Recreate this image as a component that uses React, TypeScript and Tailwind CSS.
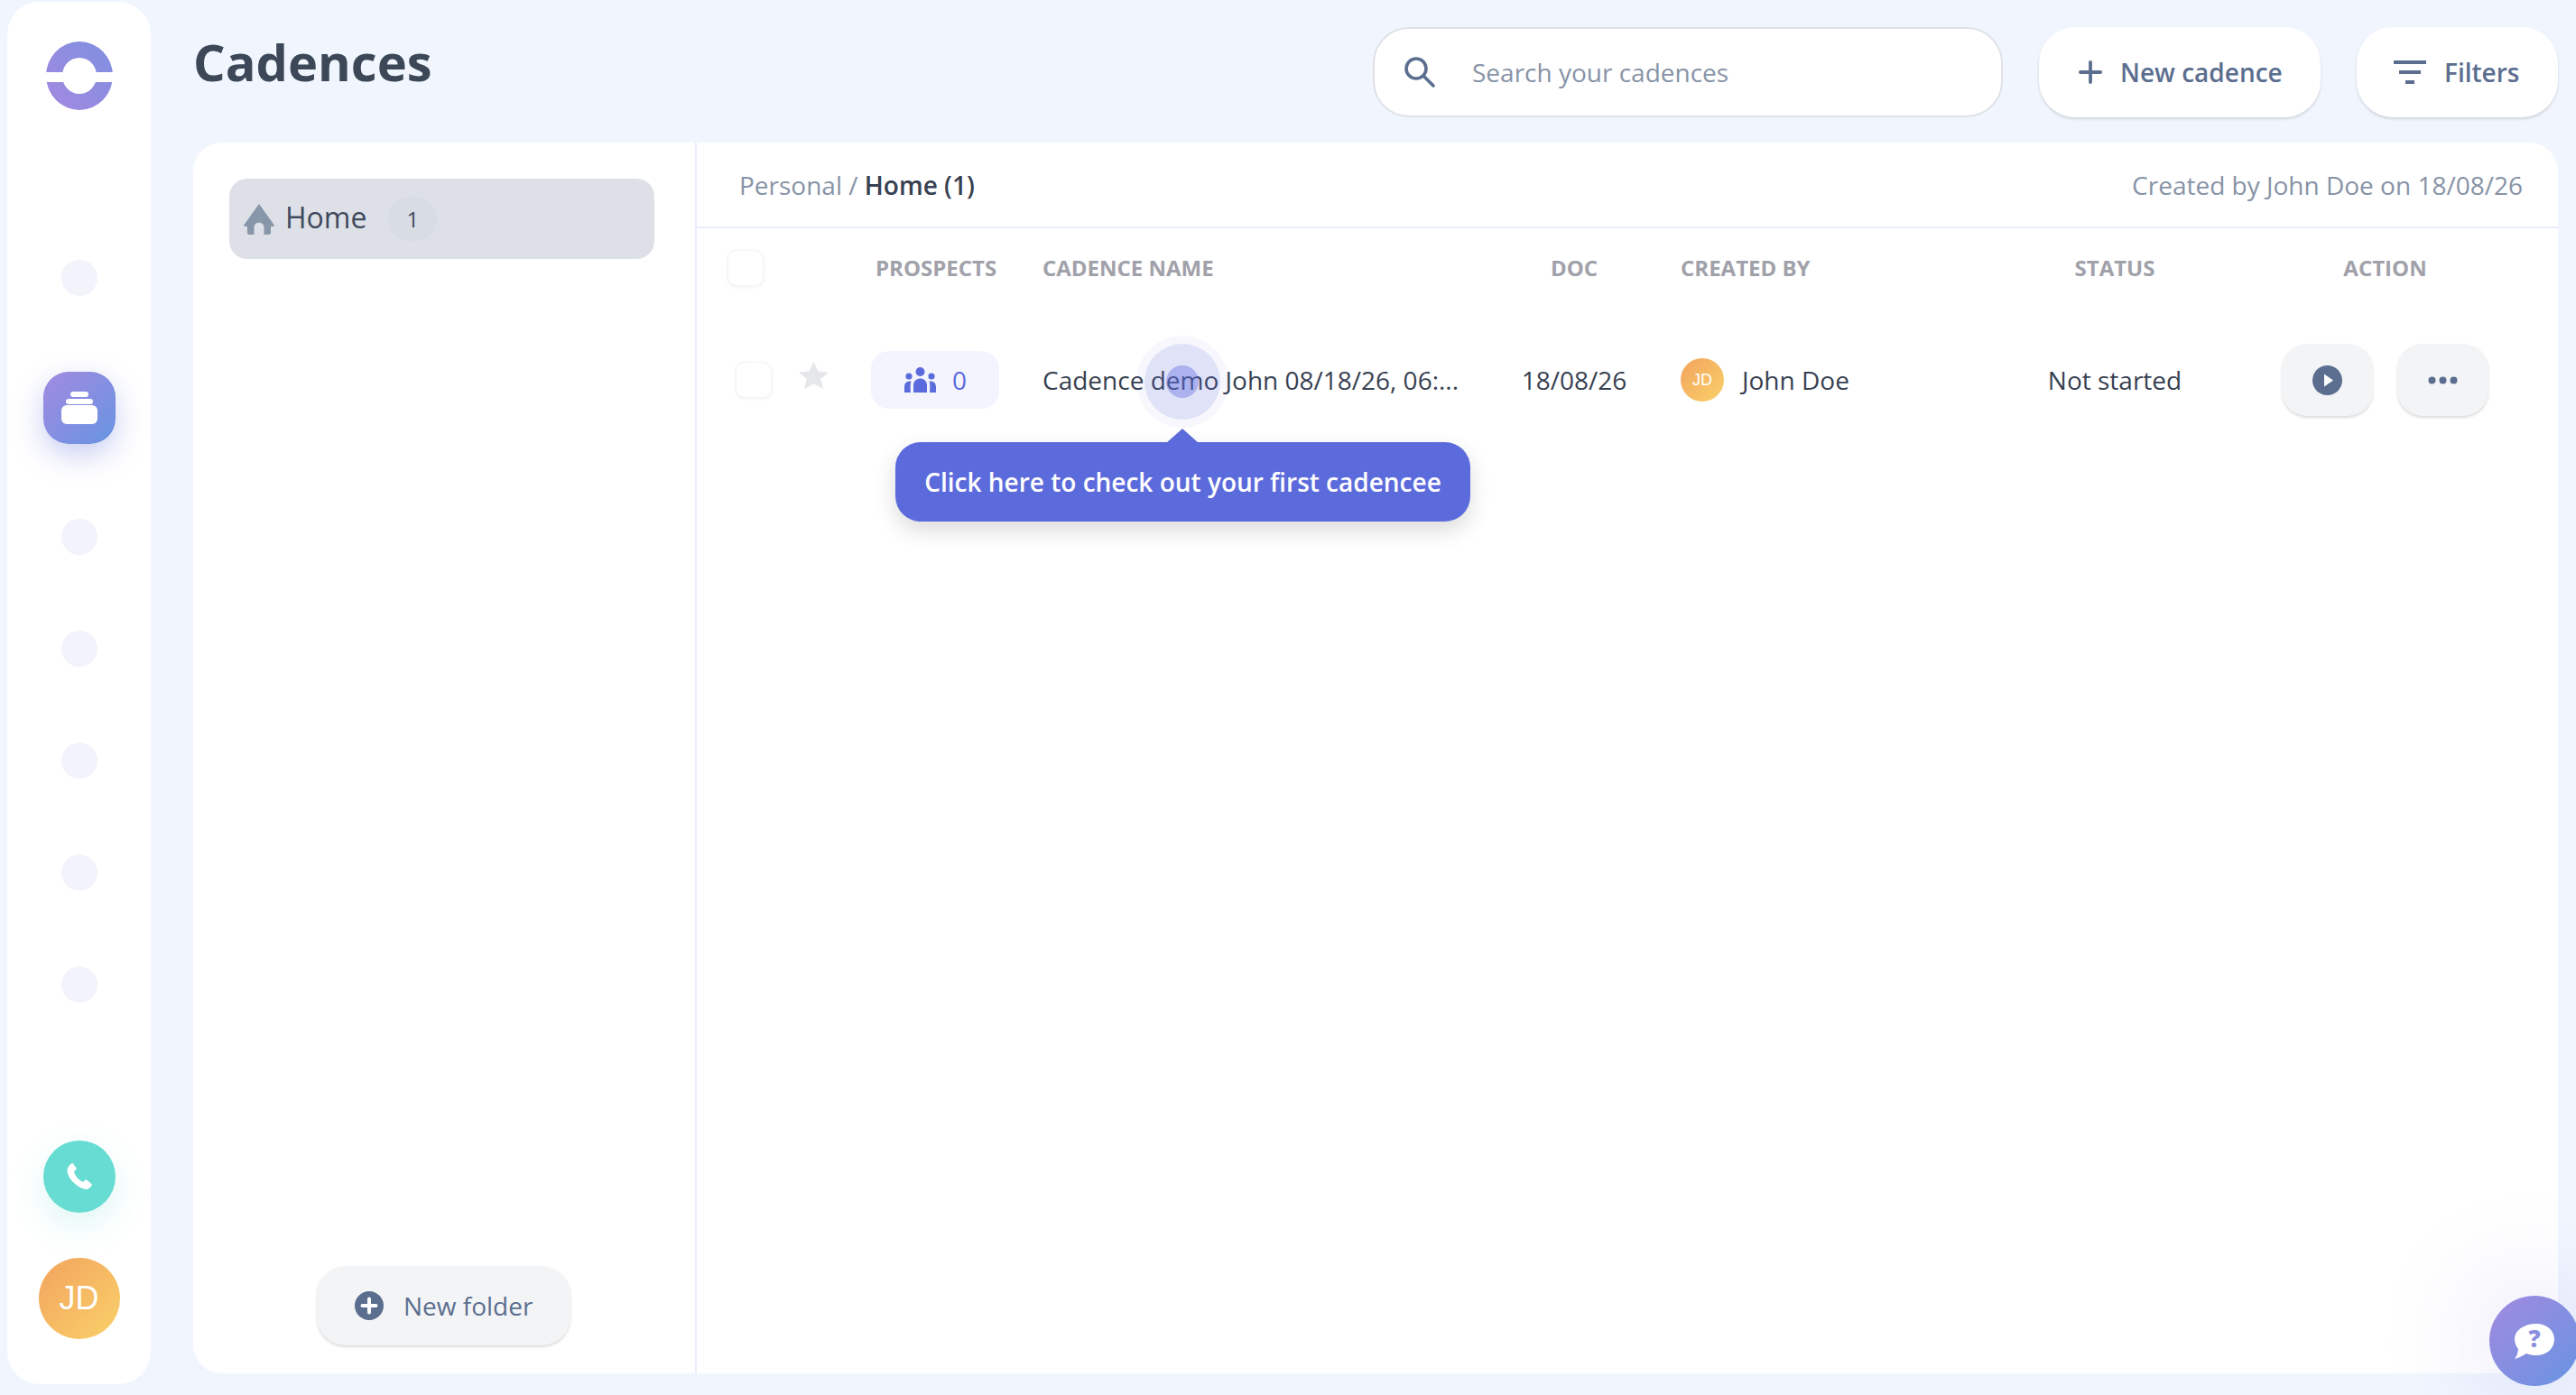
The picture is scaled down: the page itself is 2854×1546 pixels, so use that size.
import { Plus } from "lucide-react"

const railDots = [124, 124, 124, 124]

function Logo() {
  return (
    <svg width="76" height="76" viewBox="0 0 76 76">
      <defs>
        <linearGradient id="logoFill" x1="0" y1="1" x2="1" y2="0">
          <stop offset="0" stopColor="#a389e0" />
          <stop offset="1" stopColor="#7f90e0" />
        </linearGradient>
      </defs>
      <path
        fillRule="evenodd"
        fill="url(#logoFill)"
        d="M38 0a37 38 0 1 1 0 76a37 38 0 1 1 0-76zM38 18a19 20 0 1 0 0 40a19 20 0 1 0 0-40z"
      />
      <rect x="0" y="34" width="76" height="11" fill="#fff" />
    </svg>
  )
}

function StackIcon() {
  return (
    <svg width="40" height="36" viewBox="0 0 40 36" fill="#fff">
      <rect x="10" y="0" width="20" height="6" rx="3" />
      <rect x="5" y="8" width="30" height="6" rx="3" />
      <rect x="0" y="15" width="40" height="21" rx="6" />
    </svg>
  )
}

function PhoneIcon() {
  return (
    <svg width="34" height="34" viewBox="0 0 30 30" fill="#fff">
      <path d="M8.2 1.5 L12.3 7 L9.8 10.2 C10.2 14 14.5 18.8 18.6 20.2 L21.4 17.6 L27.5 22.8 C26.6 25 24.6 27 22.4 27.4 C15 27.4 3.4 17.6 3 9 C3 6.5 5.6 2.8 8.2 1.5 Z" />
    </svg>
  )
}

function HomeIcon() {
  return (
    <svg width="34" height="34" viewBox="0 0 34 34" fill="#8796a8">
      <path d="M17 0 L33.5 23 C34 24.2 33.2 25 32 25 L30 25 L30 32 C30 33.2 29.2 34 28 34 L22.5 34 L22.5 26 C22.5 19 11.5 19 11.5 26 L11.5 34 L6 34 C4.8 34 4 33.2 4 32 L4 25 L2 25 C0.8 25 0 24.2 0.5 23 Z" />
    </svg>
  )
}

function SearchIcon() {
  return (
    <svg width="36" height="36" viewBox="0 0 36 36" fill="none" stroke="#5b6e8f" strokeWidth="3.6" strokeLinecap="round">
      <circle cx="14" cy="14" r="11" />
      <path d="M22.5 22.5 L33 33" />
    </svg>
  )
}

function FilterIcon() {
  return (
    <svg width="36" height="26" viewBox="0 0 36 26" fill="#5b6e8f">
      <rect x="0" y="0" width="36" height="4" />
      <rect x="6" y="11" width="24" height="4" />
      <rect x="13" y="22" width="10" height="4" />
    </svg>
  )
}

function PeopleIcon() {
  return (
    <svg width="35" height="28" viewBox="0 0 35 28" fill="#5b6bdc">
      <circle cx="17.5" cy="5" r="5" />
      <circle cx="5" cy="10" r="3.6" />
      <circle cx="30" cy="10" r="3.6" />
      <path d="M10 28 L10 20 C10 10 25 10 25 20 L25 28 Z" />
      <path d="M0 28 L0 22 C0 17 3 15 7.5 15.5 C6.5 18 6.5 24 7 28 Z" />
      <path d="M35 28 L35 22 C35 17 32 15 27.5 15.5 C28.5 18 28.5 24 28 28 Z" />
    </svg>
  )
}

function StarIcon() {
  return (
    <svg width="33" height="30" viewBox="0 0 33 30" fill="#e5e7eb">
      <path d="M16.5 0 L21.5 10.5 L33 11.6 L24.4 19 L27 30 L16.5 24.3 L6 30 L8.6 19 L0 11.6 L11.5 10.5 Z" />
    </svg>
  )
}

function PlayIcon() {
  return (
    <svg width="33" height="33" viewBox="0 0 33 33">
      <circle cx="16.5" cy="16.5" r="16.5" fill="#5b6e8f" />
      <path d="M13 9.500 L23 16.5 L13 23.5 Z" fill="#fff" />
    </svg>
  )
}

function MoreIcon() {
  return (
    <svg width="33" height="9" viewBox="0 0 33 9" fill="#5b6e8f">
      <circle cx="4.5" cy="4.5" r="4" />
      <circle cx="16.5" cy="4.5" r="4" />
      <circle cx="28.5" cy="4.5" r="4" />
    </svg>
  )
}

function PlusCircleIcon() {
  return (
    <svg width="32" height="32" viewBox="0 0 32 32">
      <circle cx="16" cy="16" r="16" fill="#5b6e8f" />
      <path d="M16 8.5 V23.5 M8.5 16 H23.5" stroke="#fff" strokeWidth="4" strokeLinecap="round" />
    </svg>
  )
}

function ChatBubble() {
  return (
    <div className="relative h-[39px] w-[44px]">
      <svg width="44" height="39" viewBox="0 0 44 39" className="block">
        <path
          fill="#fff"
          d="M24 0 C35 0 44 7 44 17 C44 28 35 35 24 35 C20 35 16.500 34.500 13 33 C9 35.500 5 38 0 39 C2.500 36 3.500 32 4 28 C1.500 25 0 21 0 17 C0 7 11 0 24 0 Z"
        />
      </svg>
      <span className="absolute left-0 top-[-3px] w-full text-center text-[26px] font-extrabold leading-[39px] text-[#8a8fe0]">
        ?
      </span>
    </div>
  )
}

function Checkbox() {
  return <div className="h-10 w-10 rounded-[10px] border border-[#f3f4f6] bg-white shadow-[0_1px_4px_rgba(0,0,0,0.06)]" />
}

export default function App() {
  return (
    <div className="relative flex h-[1546px] w-full overflow-hidden bg-[#f1f6fe] font-['Open_Sans',sans-serif]">
      <aside className="ml-2 mt-[2px] flex h-[1532px] w-[159px] shrink-0 flex-col items-center rounded-[36px] bg-white pb-[50px] pt-[44px]">
        <Logo />
        <div className="mt-[166px] h-10 w-10 rounded-full bg-[#f3f3fc]" />
        <div className="mt-[84px] flex h-20 w-20 items-center justify-center rounded-[28px] bg-gradient-to-br from-[#a08ae0] to-[#6593e2] shadow-[0_12px_32px_rgba(110,125,220,0.38)]">
          <StackIcon />
        </div>
        <div className="mt-[83px] h-10 w-10 rounded-full bg-[#f3f3fc]" />
        {railDots.map((gap, i) => (
          <div key={i} className="mt-[84px] h-10 w-10 rounded-full bg-[#f3f3fc]" />
        ))}
        <div className="mt-auto flex h-20 w-20 items-center justify-center rounded-full bg-[#67dcd2] shadow-[0_14px_36px_rgba(103,220,210,0.22)]">
          <PhoneIcon />
        </div>
        <div className="mt-[50px] flex h-[90px] w-[90px] items-center justify-center rounded-full bg-gradient-to-br from-[#f2a35e] to-[#f9d169] font-['Liberation_Sans',sans-serif] text-[36px] text-white">
          JD
        </div>
      </aside>

      <main className="ml-[47px] mr-5 flex min-w-0 flex-1 flex-col">
        <header className="flex h-[158px] shrink-0 items-start">
          <h1 className="mt-[32px] text-[56px] font-bold leading-[72px] text-[#3c4858]">Cadences</h1>
          <div className="ml-auto mt-[30px] flex items-center gap-10">
            <div className="flex h-[100px] w-[698px] items-center rounded-[40px] border-2 border-[#e0e2e8] bg-white pl-[32px]">
              <SearchIcon />
              <span className="ml-[40px] text-[28px] text-[#8793a6]">Search your cadences</span>
            </div>
            <div className="flex h-[100px] w-[312px] items-center rounded-[40px] bg-white pl-[38px] shadow-[0_2px_3px_rgba(0,0,0,0.14)]">
              <Plus size={38} strokeWidth={2.4} color="#5b6e8f" />
              <span className="ml-[14px] text-[28px] font-semibold text-[#5b6e8f]">New cadence</span>
            </div>
            <div className="flex h-[100px] w-[223px] items-center rounded-[40px] bg-white pl-[41px] shadow-[0_2px_3px_rgba(0,0,0,0.14)]">
              <FilterIcon />
              <span className="ml-[20px] text-[28px] font-semibold text-[#5b6e8f]">Filters</span>
            </div>
          </div>
        </header>

        <section className="flex h-[1364px] rounded-[32px] bg-white">
          <div className="flex w-[558px] shrink-0 flex-col items-start border-r-2 border-[#e8eefc] pt-[40px]">
            <div className="ml-10 flex h-[89px] w-[471px] items-center rounded-[20px] bg-[#dde0e7] pl-4">
              <HomeIcon />
              <span className="mb-[4px] ml-[12px] text-[32px] leading-none text-[#3f4a5c]">Home</span>
              <span className="ml-6 flex h-[49px] w-[54px] items-center justify-center rounded-full bg-[#d8dce3] text-[24px] text-[#3f4a5c]">
                1
              </span>
            </div>
            <div className="mb-[31px] ml-[137px] mt-auto flex h-[88px] w-[281px] items-center rounded-[32px] bg-[#f3f4f6] pl-[42px] shadow-[0_2px_3px_rgba(0,0,0,0.14)]">
              <PlusCircleIcon />
              <span className="ml-[22px] text-[28px] text-[#5b6e8f]">New folder</span>
            </div>
          </div>

          <div className="flex min-w-0 flex-1 flex-col">
            <div className="flex h-[95px] shrink-0 items-center justify-between border-b-2 border-[#e8eefc] pl-[47px] pr-[39px] text-[28px] text-[#8793a6]">
              <div>
                Personal / <span className="font-semibold text-[#374151]">Home (1)</span>
              </div>
              <div>Created by John Doe on 18/08/26</div>
            </div>

            <div className="grid h-[86px] grid-cols-[193px_190px_529px_120px_439px_200px_1fr] items-center pt-[2px] text-[24px] font-bold uppercase text-[#a1a1aa]">
              <div className="pl-[34px]">
                <Checkbox />
              </div>
              <div className="pl-[5px]">Prospects</div>
              <div>Cadence name</div>
              <div className="text-center">DOC</div>
              <div className="pl-[58px]">Created by</div>
              <div className="text-center">Status</div>
              <div className="ml-[85px] w-[229px] text-center">Action</div>
            </div>

            <div className="grid h-[164px] grid-cols-[193px_190px_529px_120px_439px_200px_1fr] items-center text-[28px] text-[#374151]">
              <div className="flex items-center pl-[43px]">
                <Checkbox />
                <div className="mb-[10px] ml-[30px]">
                  <StarIcon />
                </div>
              </div>
              <div>
                <div className="flex h-16 w-[142px] items-center rounded-[20px] bg-[#f3f4fd] pl-[37px] text-[#5b6bdc]">
                  <PeopleIcon />
                  <span className="ml-[18px]">0</span>
                </div>
              </div>
              <div className="relative self-stretch">
                <div className="flex h-full items-center">Cadence demo John 08/18/26, 06:...</div>
                {/* coach mark sits on top of the row */}
                <div className="pointer-events-none absolute left-[104px] top-[33px] flex h-[102px] w-[102px] items-center justify-center rounded-full bg-[#5c6bdb]/5">
                  <div className="flex h-[84px] w-[84px] items-center justify-center rounded-full bg-[#5c6bdb]/15">
                    <div className="h-9 w-9 rounded-full bg-[#5c6bdb]/40" />
                  </div>
                </div>
                <div className="absolute left-[-163px] top-[151px] flex h-[88px] w-[637px] items-center justify-center rounded-[28px] bg-[#5c6bdb] text-[28px] font-semibold text-white shadow-[0_10px_24px_rgba(0,0,0,0.14)]">
                  <div className="absolute left-[300px] top-[-15px] h-0 w-0 border-x-[18px] border-b-[16px] border-x-transparent border-b-[#5c6bdb]" />
                  Click here to check out your first cadencee
                </div>
              </div>
              <div className="text-center">18/08/26</div>
              <div className="flex items-center pl-[58px]">
                <div className="flex h-12 w-12 items-center justify-center rounded-full bg-gradient-to-br from-[#f2a35e] to-[#f9d169] font-['Liberation_Sans',sans-serif] text-[18px] text-white">
                  JD
                </div>
                <span className="ml-5">John Doe</span>
              </div>
              <div className="text-center">Not started</div>
              <div className="flex items-center gap-[27px] pl-[85px]">
                <div className="flex h-20 w-[101px] items-center justify-center rounded-[28px] bg-[#f3f4f6] shadow-[0_2px_3px_rgba(0,0,0,0.14)]">
                  <PlayIcon />
                </div>
                <div className="flex h-20 w-[101px] items-center justify-center rounded-[28px] bg-[#f3f4f6] shadow-[0_2px_3px_rgba(0,0,0,0.14)]">
                  <MoreIcon />
                </div>
              </div>
            </div>
          </div>
        </section>
      </main>

      <div className="absolute left-[2758px] top-[1436px] flex h-[100px] w-[100px] items-center justify-center rounded-full bg-gradient-to-br from-[#a08ae0] to-[#6593e2] shadow-[0_0_120px_rgba(130,120,220,0.3)]">
        <ChatBubble />
      </div>
    </div>
  )
}
